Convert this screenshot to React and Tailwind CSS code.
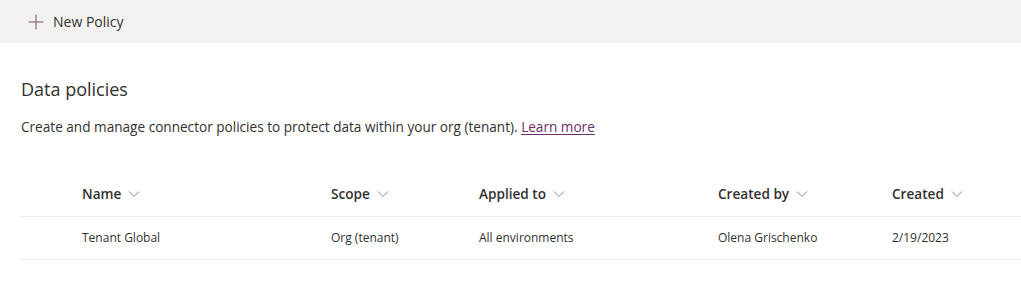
import React from 'react';

const columns = [
  { key: 'name', label: 'Name' },
  { key: 'scope', label: 'Scope' },
  { key: 'applied', label: 'Applied to' },
  { key: 'createdBy', label: 'Created by' },
  { key: 'created', label: 'Created' },
];

const rows = [
  {
    name: 'Tenant Global',
    scope: 'Org (tenant)',
    applied: 'All environments',
    createdBy: 'Olena Grischenko',
    created: '2/19/2023',
  },
];

const gridCols = 'grid grid-cols-[62px_249px_148px_239px_174px_1fr]';

const Chevron = () => (
  <svg width="12" height="8" viewBox="0 0 12 8" className="ml-[7px] mt-[1px]">
    <path d="M1 1.5 L6 6.5 L11 1.5" fill="none" stroke="#8a8886" strokeWidth="1" />
  </svg>
);

const PlusIcon = () => (
  <svg width="16" height="16" viewBox="0 0 16 16">
    <path d="M8 0.5 V15.5 M0.5 8 H15.5" fill="none" stroke="#7d4f6f" strokeWidth="1" />
  </svg>
);

export default function App() {
  return (
    <div className="min-h-[297px] bg-white text-[#323130]" style={{ fontFamily: '"Open Sans", "Noto Sans", sans-serif' }}>
      {/* Command bar */}
      <div className="h-[43px] bg-[#f3f2f1] flex items-center pl-[28px]">
        <button className="flex items-center gap-[9px] text-[14px] text-[#323130]">
          <PlusIcon />
          <span>New Policy</span>
        </button>
      </div>

      <div className="pl-[20px]">
        <h1 className="mt-[32px] pl-[1px] text-[18px] leading-[28px] font-normal">Data policies</h1>
        <p className="mt-[14px] pl-[1px] text-[13.6px] leading-[20px]">
          Create and manage connector policies to protect data within your org (tenant).{' '}
          <a href="#" className="text-[#6b2f6b] underline underline-offset-2">Learn more</a>
        </p>

        {/* Table */}
        <div className="mt-[35px]">
          <div className={`${gridCols} h-[45px] items-center border-b border-[#edebe9]`}>
            <div />
            {columns.map((c) => (
              <div key={c.key} className="flex items-center text-[13.6px] font-semibold">
                {c.label}
                <Chevron />
              </div>
            ))}
          </div>
          {rows.map((r, i) => (
            <div key={i} className={`${gridCols} h-[43px] items-center border-b border-[#edebe9]`}>
              <div />
              {columns.map((c) => (
                <div key={c.key} className="text-[12px] text-[#323130]">
                  {r[c.key]}
                </div>
              ))}
            </div>
          ))}
        </div>
      </div>
    </div>
  );
}
